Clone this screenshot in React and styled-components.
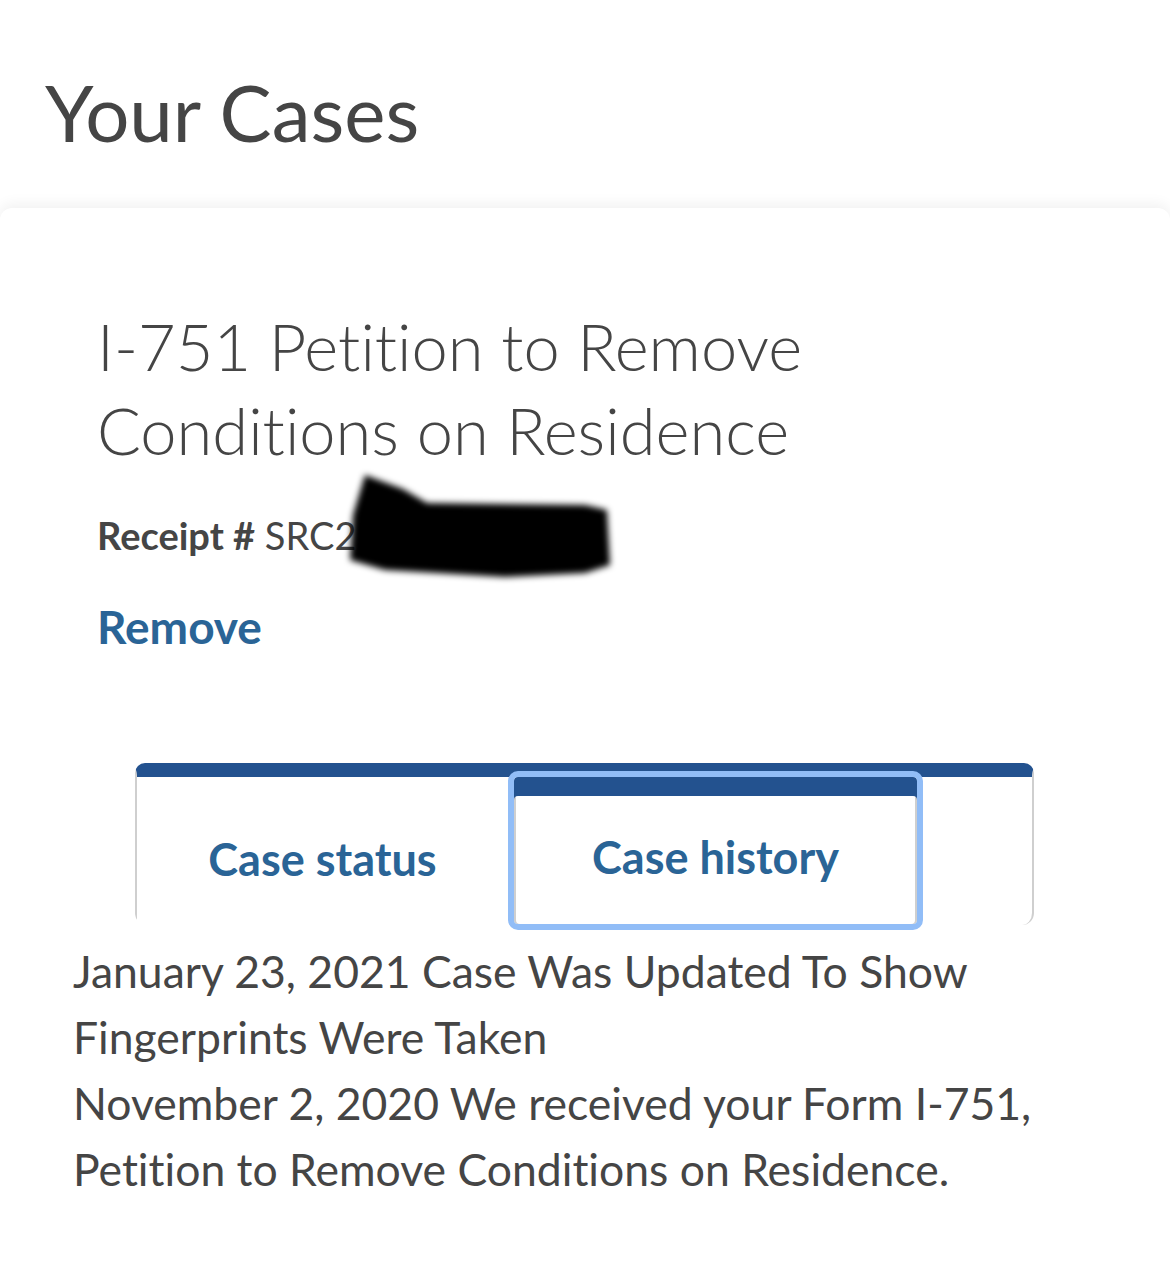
import React from "react";
import styled, { createGlobalStyle } from "styled-components";

const Global = createGlobalStyle`
  html, body { margin: 0; padding: 0; background: #ffffff; }
  body {
    font-family: "Lato", "Open Sans", sans-serif;
    color: #454545;
    font-variant-ligatures: none;
  }
`;

const Page = styled.div`
  width: 1170px;
  height: 1268px;
  background: #fff;
  overflow: hidden;
`;

const PageTitle = styled.h1`
  margin: 0;
  padding: 73px 0 0 45px;
  height: 208px;
  box-sizing: border-box;
  font-size: 78px;
  font-weight: 400;
  line-height: 1;
  color: #454545;
`;

const Card = styled.section`
  background: #fff;
  border-radius: 12px 12px 0 0;
  box-shadow: 0 -4px 14px rgba(0, 0, 0, 0.06);
  padding-top: 96px;
  height: 1060px;
  box-sizing: border-box;
`;

const CaseInfo = styled.div`
  padding-left: 97px;
`;

const FormTitle = styled.h2`
  margin: 0;
  font-size: 65px;
  font-weight: 300;
  line-height: 84px;
  color: #454545;
`;

const Receipt = styled.p`
  position: relative;
  margin: 39px 0 0;
  font-size: 38px;
  line-height: 48px;
  color: #454545;
  strong { font-weight: 700; }
`;

const Redaction = styled.svg`
  position: absolute;
  left: 248px;
  top: -46px;
  width: 270px;
  height: 116px;
  overflow: visible;
`;

const RemoveLink = styled.a`
  display: inline-block;
  margin-top: 42px;
  font-size: 46px;
  font-weight: 700;
  line-height: 52px;
  color: #2a6496;
  text-decoration: none;
`;

const Tabs = styled.div`
  margin: 110px 0 0 135px;
  width: 899px;
  height: 162px;
  box-sizing: border-box;
  border-top: 14px solid #23528f;
  border-left: 2px solid #cfcfcf;
  border-right: 2px solid #cfcfcf;
  border-radius: 10px 10px 12px 12px;
  display: flex;
  align-items: flex-start;
`;

const Tab = styled.button`
  position: relative;
  width: ${(p) => p.$w}px;
  height: 148px;
  background: #fff;
  border: none;
  padding: 16px 0 0;
  font-family: inherit;
  font-variant-ligatures: none;
  font-size: 45px;
  font-weight: 700;
  color: #2a6496;
  cursor: pointer;
  box-sizing: border-box;
  ${(p) =>
    p.$active &&
    `
    margin-top: -6px;
    height: 159px;
    border: 6px solid #91bdf7;
    border-radius: 10px;
    box-shadow: inset 0 19px 0 #23528f, inset 2px 0 0 #cfcfcf, inset -2px 0 0 #cfcfcf;
    padding-top: 13px;
  `}
`;

const History = styled.div`
  padding: 13px 0 0 73px;
  font-size: 44.5px;
  line-height: 66px;
  color: #454545;
`;

const HistoryItem = styled.p`
  margin: 0;
  max-width: 990px;
`;

export default function App() {
  return (
    <Page>
      <Global />
      <PageTitle>Your Cases</PageTitle>
      <Card>
        <CaseInfo>
          <FormTitle>
            I-751 Petition to Remove
            <br />
            Conditions on Residence
          </FormTitle>
          <Receipt>
            <strong>Receipt #</strong> SRC2
            <Redaction viewBox="0 0 270 116" aria-hidden="true">
              <defs>
                <filter id="blur" x="-20%" y="-20%" width="140%" height="140%">
                  <feGaussianBlur stdDeviation="3" />
                </filter>
              </defs>
              <path
                d="M20 10 L58 24 L82 38 L240 40 L262 45 L265 100 L240 108 L160 112 L40 105 L5 95 L8 50 Z"
                fill="#000"
                filter="url(#blur)"
              />
            </Redaction>
          </Receipt>
          <RemoveLink href="#">Remove</RemoveLink>
        </CaseInfo>
        <Tabs>
          <Tab $w={371}>Case status</Tab>
          <Tab $w={415} $active>
            Case history
          </Tab>
        </Tabs>
        <History>
          <HistoryItem>January 23, 2021 Case Was Updated To Show Fingerprints Were Taken</HistoryItem>
          <HistoryItem>November 2, 2020 We received your Form I-751, Petition to Remove Conditions on Residence.</HistoryItem>
        </History>
      </Card>
    </Page>
  );
}
